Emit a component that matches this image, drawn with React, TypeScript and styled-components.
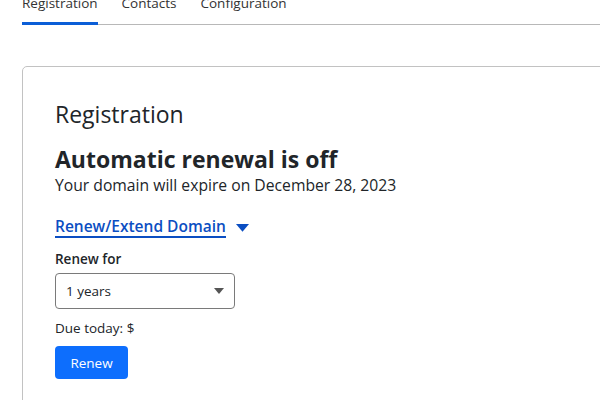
import { useState } from "react";
import styled, { createGlobalStyle } from "styled-components";

const GlobalStyle = createGlobalStyle`
body {
  margin: 0;
  font-family: "Open Sans", "Noto Sans", sans-serif;
  color: #212529;
  background: #fff;
  overflow: hidden;
}
`;

const Page = styled.div`
width: 600px;
height: 400px;
overflow: hidden;
`;

const TabBar = styled.nav`
display: flex;
margin: -10px 0 0 22px;
border-bottom: 1px solid #b8b8b8;
`;

const Tab = styled.button<{ $active?: boolean }>`
font-family: inherit;
font-size: 13.5px;
color: #333;
background: none;
border: none;
padding: 4px 0 10px;
margin-right: 24px;
border-bottom: 3px solid ${(p) => (p.$active ? "#0b5ed7" : "transparent")};
margin-bottom: -1px;
cursor: pointer;
`;

const Card = styled.section`
margin: 41px 0 0 22px;
width: 700px;
border: 1px solid #c2c2c2;
border-radius: 5px;
padding: 33px 32px 40px;
`;

const Title = styled.h2`
font-size: 23px;
font-weight: 400;
margin: 0 0 13px;
line-height: 1.3;
`;

const Status = styled.h3`
font-size: 23px;
font-weight: 700;
margin: 0;
line-height: 1.4;
`;

const Expiry = styled.p`
font-size: 15.7px;
margin: 0 0 22px;
line-height: 1.3;
`;

const Toggle = styled.button`
display: flex;
align-items: center;
gap: 10px;
background: none;
border: none;
padding: 0;
font-family: inherit;
font-size: 15.5px;
font-weight: 600;
color: #0b4ec2;
cursor: pointer;
margin-bottom: 12px;
`;

const ToggleText = styled.span`
border-bottom: 2px solid #0b4ec2;
line-height: 1.2;
`;

const Label = styled.label`
display: block;
font-size: 13.5px;
font-weight: 600;
margin-bottom: 5px;
`;

const SelectBox = styled.div`
display: flex;
align-items: center;
justify-content: space-between;
width: 180px;
height: 36px;
box-sizing: border-box;
border: 1px solid #7a7a7a;
border-radius: 4px;
padding: 0 10px;
font-size: 13.5px;
margin-bottom: 10px;
`;

const Due = styled.p`
font-size: 13.5px;
margin: 0 0 9px;
`;

const PrimaryButton = styled.button`
background: #0d6efd;
color: #fff;
border: none;
border-radius: 4px;
font-family: inherit;
font-size: 13.5px;
width: 73px;
height: 33px;
cursor: pointer;
`;

function Caret({ size, color }: { size: number; color: string }) {
  return (
    <svg width={size} height={size * 0.6} viewBox="0 0 10 6">
      <path d="M0 0 L10 0 L5 6 Z" fill={color} />
    </svg>
  );
}

export default function App() {
  const [open, setOpen] = useState(true);

  return (
    <Page>
      <GlobalStyle />
      <TabBar>
        <Tab $active>Registration</Tab>
        <Tab>Contacts</Tab>
        <Tab>Configuration</Tab>
      </TabBar>
      <Card>
        <Title>Registration</Title>
        <Status>Automatic renewal is off</Status>
        <Expiry>Your domain will expire on December 28, 2023</Expiry>
        <Toggle onClick={() => setOpen(!open)}>
          <ToggleText>Renew/Extend Domain</ToggleText>
          <Caret size={13} color="#0b4ec2" />
        </Toggle>
        {open && (
          <>
            <Label>Renew for</Label>
            <SelectBox>
              <span>1 years</span>
              <Caret size={10} color="#555" />
            </SelectBox>
            <Due>Due today: $</Due>
            <PrimaryButton>Renew</PrimaryButton>
          </>
        )}
      </Card>
    </Page>
  );
}
